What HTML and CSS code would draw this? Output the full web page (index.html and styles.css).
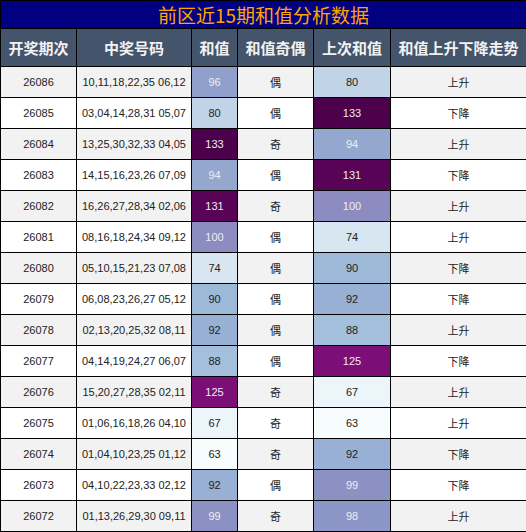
FILE: index.html
```html
<!DOCTYPE html>
<html lang="zh-CN">

<head>
    <meta charset="UTF-8">
    <meta name="viewport" content="width=device-width, initial-scale=1.0">
    <title>前区近15期和值分析数据</title>
    <link rel="stylesheet" href="styles.css">
</head>

<body>
    <table class="sum-table">
        <colgroup>
            <col class="col-issue">
            <col class="col-nums">
            <col class="col-sum">
            <col class="col-parity">
            <col class="col-prev">
            <col class="col-trend">
        </colgroup>
        <thead>
            <tr class="title-row">
                <th colspan="6">前区近15期和值分析数据</th>
            </tr>
            <tr class="head-row">
                <th>开奖期次</th>
                <th>中奖号码</th>
                <th>和值</th>
                <th>和值奇偶</th>
                <th>上次和值</th>
                <th>和值上升下降走势</th>
            </tr>
        </thead>
        <tbody>
            <tr>
                <td>26086</td><td>10,11,18,22,35 06,12</td>
                <td class="heat light" style="background:#909fcb">96</td><td>偶</td>
                <td class="heat" style="background:#c1d4e7">80</td><td>上升</td>
            </tr>
            <tr>
                <td>26085</td><td>03,04,14,28,31 05,07</td>
                <td class="heat" style="background:#c1d4e7">80</td><td>偶</td>
                <td class="heat light" style="background:#4d004b">133</td><td>下降</td>
            </tr>
            <tr>
                <td>26084</td><td>13,25,30,32,33 04,05</td>
                <td class="heat light" style="background:#4d004b">133</td><td>奇</td>
                <td class="heat light" style="background:#94a7cf">94</td><td>上升</td>
            </tr>
            <tr>
                <td>26083</td><td>14,15,16,23,26 07,09</td>
                <td class="heat light" style="background:#94a7cf">94</td><td>偶</td>
                <td class="heat light" style="background:#590356">131</td><td>下降</td>
            </tr>
            <tr>
                <td>26082</td><td>16,26,27,28,34 02,06</td>
                <td class="heat light" style="background:#590356">131</td><td>奇</td>
                <td class="heat light" style="background:#8c8cc1">100</td><td>上升</td>
            </tr>
            <tr>
                <td>26081</td><td>08,16,18,24,34 09,12</td>
                <td class="heat light" style="background:#8c8cc1">100</td><td>偶</td>
                <td class="heat" style="background:#d7e6f0">74</td><td>上升</td>
            </tr>
            <tr>
                <td>26080</td><td>05,10,15,21,23 07,08</td>
                <td class="heat" style="background:#d7e6f0">74</td><td>偶</td>
                <td class="heat" style="background:#9db9d8">90</td><td>下降</td>
            </tr>
            <tr>
                <td>26079</td><td>06,08,23,26,27 05,12</td>
                <td class="heat" style="background:#9db9d8">90</td><td>偶</td>
                <td class="heat" style="background:#98b0d4">92</td><td>下降</td>
            </tr>
            <tr>
                <td>26078</td><td>02,13,20,25,32 08,11</td>
                <td class="heat" style="background:#98b0d4">92</td><td>偶</td>
                <td class="heat" style="background:#a3bfdc">88</td><td>上升</td>
            </tr>
            <tr>
                <td>26077</td><td>04,14,19,24,27 06,07</td>
                <td class="heat" style="background:#a3bfdc">88</td><td>偶</td>
                <td class="heat light" style="background:#7c0e78">125</td><td>下降</td>
            </tr>
            <tr>
                <td>26076</td><td>15,20,27,28,35 02,11</td>
                <td class="heat light" style="background:#7c0e78">125</td><td>奇</td>
                <td class="heat" style="background:#ecf5f9">67</td><td>上升</td>
            </tr>
            <tr>
                <td>26075</td><td>01,06,16,18,26 04,10</td>
                <td class="heat" style="background:#ecf5f9">67</td><td>奇</td>
                <td class="heat" style="background:#f7fcfd">63</td><td>上升</td>
            </tr>
            <tr>
                <td>26074</td><td>01,04,10,23,25 01,12</td>
                <td class="heat" style="background:#f7fcfd">63</td><td>奇</td>
                <td class="heat" style="background:#98b0d4">92</td><td>下降</td>
            </tr>
            <tr>
                <td>26073</td><td>04,10,22,23,33 02,12</td>
                <td class="heat" style="background:#98b0d4">92</td><td>偶</td>
                <td class="heat light" style="background:#8c91c4">99</td><td>下降</td>
            </tr>
            <tr>
                <td>26072</td><td>01,13,26,29,30 09,11</td>
                <td class="heat light" style="background:#8c91c4">99</td><td>奇</td>
                <td class="heat light" style="background:#8c96c6">98</td><td>上升</td>
            </tr>
        </tbody>
    </table>
</body>

</html>
```

FILE: styles.css
```css
body {
    margin: 0;
    background-color: #fff;
    font-family: 'Liberation Sans', 'Noto Sans CJK SC', sans-serif;
}

.sum-table {
    width: 526px;
    table-layout: fixed;
    border-collapse: collapse;
    border: 1px solid #000;
}

.col-issue { width: 76px; }
.col-nums { width: 115px; }
.col-sum { width: 46px; }
.col-parity { width: 76px; }
.col-prev { width: 77px; }
.col-trend { width: 136px; }

.sum-table th,
.sum-table td {
    border: 1px solid #000;
    padding: 0;
    text-align: center;
    white-space: nowrap;
    overflow: hidden;
}

/* title bar */
.title-row th {
    height: 27px;
    background-color: #000080;
    color: #ffa500;
    font-family: 'Noto Sans CJK SC', sans-serif;
    font-size: 19px;
    font-weight: normal;
    line-height: 27px;
}

.head-row th {
    height: 37px;
    background-color: #44546a;
    color: #f2f2f2;
    font-family: 'Noto Sans CJK SC', sans-serif;
    font-size: 15px;
    font-weight: bold;
}

.sum-table td {
    height: 30px;
    font-size: 11px;
    color: #222;
    background-color: #fff;
}

.sum-table tbody tr:nth-child(odd) td {
    background-color: #f2f2f2;
}

.sum-table td.light {
    color: #eeeeee;
}
```
